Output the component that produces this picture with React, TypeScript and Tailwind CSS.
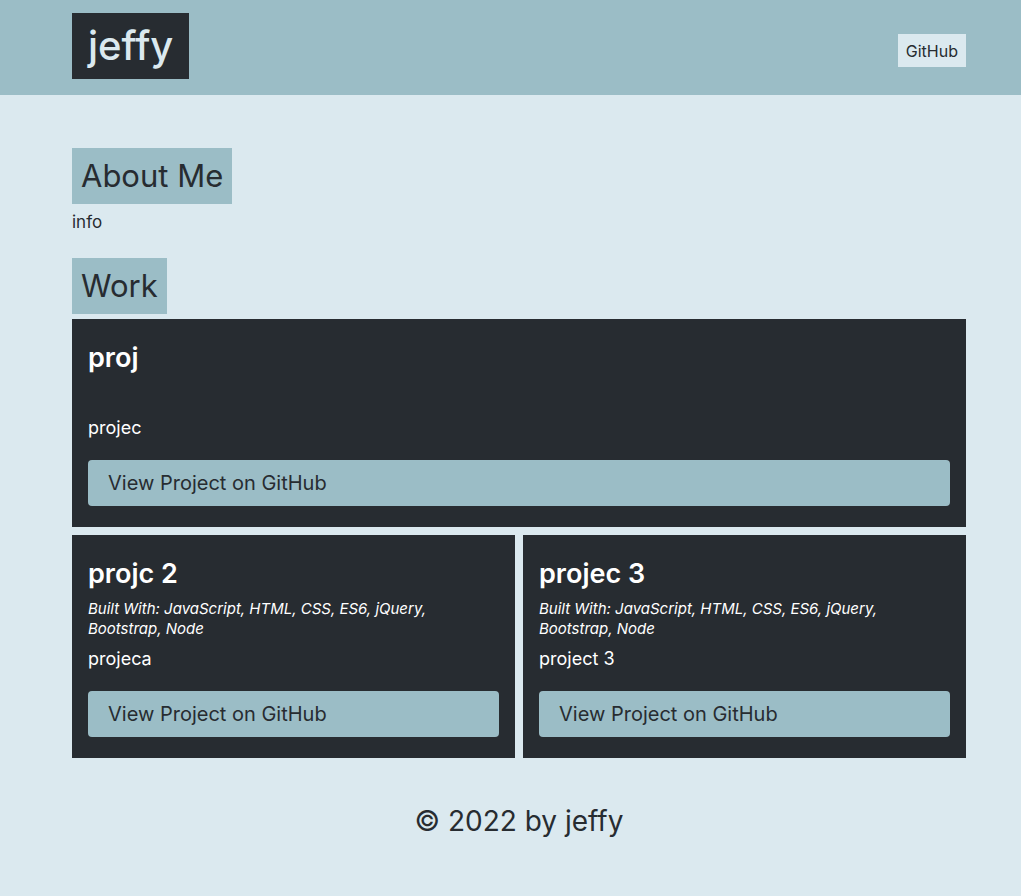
const projects = [
  { title: "proj", desc: "projec", built: null as string | null },
  { title: "projc 2", desc: "projeca", built: "Built With: JavaScript, HTML, CSS, ES6, jQuery, Bootstrap, Node" },
  { title: "projec 3", desc: "project 3", built: "Built With: JavaScript, HTML, CSS, ES6, jQuery, Bootstrap, Node" },
];

function ProjectCard({ title, desc, built }: { title: string; desc: string; built: string | null }) {
  return (
    <div className="bg-[#272c31] px-4 pt-[22px] pb-[21px] text-white">
      <h3 className="text-[27px] font-semibold leading-[34px]">{title}</h3>
      {built ? (
        <p className="mt-2 text-[15px] italic leading-5">{built}</p>
      ) : (
        <div className="mt-2 h-[25px]" />
      )}
      <p className="mt-2 text-[18px] leading-6">{desc}</p>
      <a
        href="#"
        className="mt-5 flex h-[46px] items-center rounded bg-[#9bbdc6] px-5 text-[20px] text-[#272c31]"
      >
        View Project on GitHub
      </a>
    </div>
  );
}

export default function App() {
  return (
    <div className="min-h-[896px] bg-[#dbe9ef] text-[#272c31] font-['Inter',sans-serif]">
      {/* Header */}
      <header className="h-[95px] bg-[#9bbdc6] pl-[72px] pr-[55px] pt-[13px]">
        <div className="flex items-start justify-between">
          <h1 className="flex h-[66px] items-center bg-[#272c31] px-4 text-[40px] font-medium text-[#dbe9ef]">jeffy</h1>
          <a href="#" className="mt-[21px] flex h-[33px] items-center bg-[#dbe9ef] px-2 text-[16px]">
            GitHub
          </a>
        </div>
      </header>

      <main className="pl-[72px] pr-[55px] pt-[53px]">
        <section>
          <h2 className="inline-flex h-[56px] items-center bg-[#9bbdc6] px-[9px] text-[31px]">About Me</h2>
          <p className="mt-[6px] text-[17px] leading-6">info</p>
        </section>

        <section className="mt-[24px]">
          <h2 className="inline-flex h-[56px] items-center bg-[#9bbdc6] px-[9px] text-[31px]">Work</h2>
          <div className="mt-[5px] flex flex-col gap-2">
            <ProjectCard {...projects[0]} />
            <div className="grid grid-cols-2 gap-2">
              <ProjectCard {...projects[1]} />
              <ProjectCard {...projects[2]} />
            </div>
          </div>
        </section>

        <footer className="pt-[44px] text-center text-[28px] leading-[38px]">© 2022 by jeffy</footer>
      </main>
    </div>
  );
}
